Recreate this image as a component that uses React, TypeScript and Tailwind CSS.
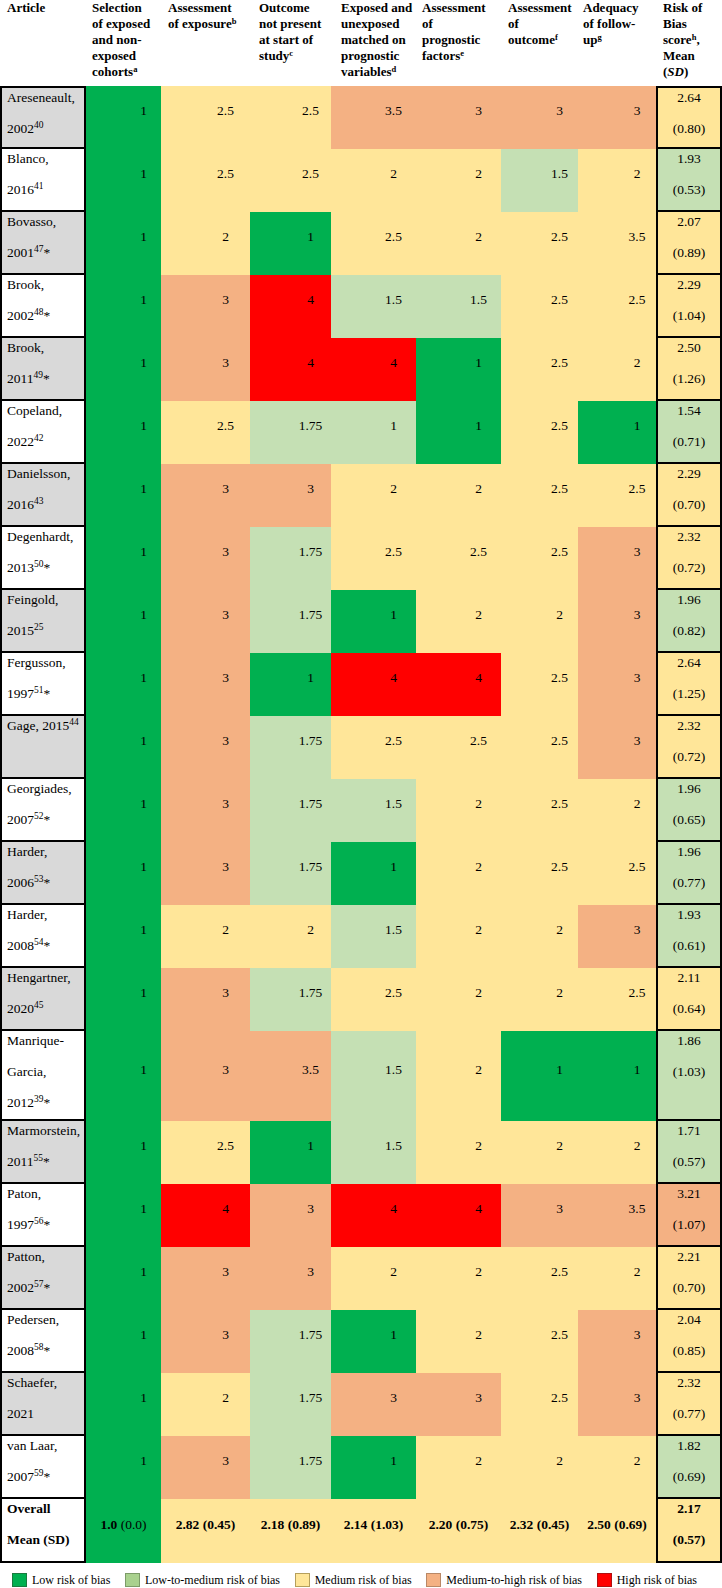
import React from "react";

type Col = "G" | "L" | "Y" | "O" | "R";

const BG: Record<Col, string> = {
  G: "bg-[#00b050]",
  L: "bg-[#c5e0b4]",
  Y: "bg-[#ffe699]",
  O: "bg-[#f4b183]",
  R: "bg-[#ff0000]",
};

const GRID =
  "grid grid-cols-[86px_75px_89px_81px_85px_85px_77px_78px_66px]";

type Row = {
  lines: React.ReactNode[];
  vals: [string, Col][];
  risk: [string, string, Col];
  gray: boolean;
  tall?: boolean;
};

const S = (n: string) => <sup className="text-[9.5px]">{n}</sup>;

const rows: Row[] = [
  { lines: ["Areseneault,", <>2002{S("40")}</>], vals: [["1", "G"], ["2.5", "Y"], ["2.5", "Y"], ["3.5", "O"], ["3", "O"], ["3", "O"], ["3", "O"]], risk: ["2.64", "(0.80)", "Y"], gray: true },
  { lines: ["Blanco,", <>2016{S("41")}</>], vals: [["1", "G"], ["2.5", "Y"], ["2.5", "Y"], ["2", "Y"], ["2", "Y"], ["1.5", "L"], ["2", "Y"]], risk: ["1.93", "(0.53)", "L"], gray: false },
  { lines: ["Bovasso,", <>2001{S("47")}*</>], vals: [["1", "G"], ["2", "Y"], ["1", "G"], ["2.5", "Y"], ["2", "Y"], ["2.5", "Y"], ["3.5", "Y"]], risk: ["2.07", "(0.89)", "Y"], gray: true },
  { lines: ["Brook,", <>2002{S("48")}*</>], vals: [["1", "G"], ["3", "O"], ["4", "R"], ["1.5", "L"], ["1.5", "L"], ["2.5", "Y"], ["2.5", "Y"]], risk: ["2.29", "(1.04)", "Y"], gray: false },
  { lines: ["Brook,", <>2011{S("49")}*</>], vals: [["1", "G"], ["3", "O"], ["4", "R"], ["4", "R"], ["1", "G"], ["2.5", "Y"], ["2", "Y"]], risk: ["2.50", "(1.26)", "Y"], gray: true },
  { lines: ["Copeland,", <>2022{S("42")}</>], vals: [["1", "G"], ["2.5", "Y"], ["1.75", "L"], ["1", "L"], ["1", "G"], ["2.5", "Y"], ["1", "G"]], risk: ["1.54", "(0.71)", "L"], gray: false },
  { lines: ["Danielsson,", <>2016{S("43")}</>], vals: [["1", "G"], ["3", "O"], ["3", "O"], ["2", "Y"], ["2", "Y"], ["2.5", "Y"], ["2.5", "Y"]], risk: ["2.29", "(0.70)", "Y"], gray: true },
  { lines: ["Degenhardt,", <>2013{S("50")}*</>], vals: [["1", "G"], ["3", "O"], ["1.75", "L"], ["2.5", "Y"], ["2.5", "Y"], ["2.5", "Y"], ["3", "O"]], risk: ["2.32", "(0.72)", "Y"], gray: false },
  { lines: ["Feingold,", <>2015{S("25")}</>], vals: [["1", "G"], ["3", "O"], ["1.75", "L"], ["1", "G"], ["2", "Y"], ["2", "Y"], ["3", "O"]], risk: ["1.96", "(0.82)", "L"], gray: true },
  { lines: ["Fergusson,", <>1997{S("51")}*</>], vals: [["1", "G"], ["3", "O"], ["1", "G"], ["4", "R"], ["4", "R"], ["2.5", "Y"], ["3", "O"]], risk: ["2.64", "(1.25)", "Y"], gray: false },
  { lines: [<>Gage, 2015{S("44")}</>], vals: [["1", "G"], ["3", "O"], ["1.75", "L"], ["2.5", "Y"], ["2.5", "Y"], ["2.5", "Y"], ["3", "O"]], risk: ["2.32", "(0.72)", "Y"], gray: true },
  { lines: ["Georgiades,", <>2007{S("52")}*</>], vals: [["1", "G"], ["3", "O"], ["1.75", "L"], ["1.5", "L"], ["2", "Y"], ["2.5", "Y"], ["2", "Y"]], risk: ["1.96", "(0.65)", "L"], gray: false },
  { lines: ["Harder,", <>2006{S("53")}*</>], vals: [["1", "G"], ["3", "O"], ["1.75", "L"], ["1", "G"], ["2", "Y"], ["2.5", "Y"], ["2.5", "Y"]], risk: ["1.96", "(0.77)", "L"], gray: true },
  { lines: ["Harder,", <>2008{S("54")}*</>], vals: [["1", "G"], ["2", "Y"], ["2", "Y"], ["1.5", "L"], ["2", "Y"], ["2", "Y"], ["3", "O"]], risk: ["1.93", "(0.61)", "L"], gray: false },
  { lines: ["Hengartner,", <>2020{S("45")}</>], vals: [["1", "G"], ["3", "O"], ["1.75", "L"], ["2.5", "Y"], ["2", "Y"], ["2", "Y"], ["2.5", "Y"]], risk: ["2.11", "(0.64)", "Y"], gray: true },
  { lines: ["Manrique-", "Garcia,", <>2012{S("39")}*</>], vals: [["1", "G"], ["3", "O"], ["3.5", "O"], ["1.5", "L"], ["2", "Y"], ["1", "G"], ["1", "G"]], risk: ["1.86", "(1.03)", "L"], gray: false, tall: true },
  { lines: ["Marmorstein,", <>2011{S("55")}*</>], vals: [["1", "G"], ["2.5", "Y"], ["1", "G"], ["1.5", "L"], ["2", "Y"], ["2", "Y"], ["2", "Y"]], risk: ["1.71", "(0.57)", "L"], gray: true },
  { lines: ["Paton,", <>1997{S("56")}*</>], vals: [["1", "G"], ["4", "R"], ["3", "O"], ["4", "R"], ["4", "R"], ["3", "O"], ["3.5", "O"]], risk: ["3.21", "(1.07)", "O"], gray: false },
  { lines: ["Patton,", <>2002{S("57")}*</>], vals: [["1", "G"], ["3", "O"], ["3", "O"], ["2", "Y"], ["2", "Y"], ["2.5", "Y"], ["2", "Y"]], risk: ["2.21", "(0.70)", "Y"], gray: true },
  { lines: ["Pedersen,", <>2008{S("58")}*</>], vals: [["1", "G"], ["3", "O"], ["1.75", "L"], ["1", "G"], ["2", "Y"], ["2.5", "Y"], ["3", "O"]], risk: ["2.04", "(0.85)", "Y"], gray: false },
  { lines: ["Schaefer,", "2021"], vals: [["1", "G"], ["2", "Y"], ["1.75", "L"], ["3", "O"], ["3", "O"], ["2.5", "Y"], ["3", "O"]], risk: ["2.32", "(0.77)", "Y"], gray: true },
  { lines: ["van Laar,", <>2007{S("59")}*</>], vals: [["1", "G"], ["3", "O"], ["1.75", "L"], ["1", "G"], ["2", "Y"], ["2", "Y"], ["2", "Y"]], risk: ["1.82", "(0.69)", "L"], gray: false },
];

const H = (n: string) => <sup className="text-[8.5px]">{n}</sup>;

function Header() {
  return (
    <div className={`${GRID} h-[86px] text-[13px] leading-[16px] font-bold whitespace-nowrap`}>
      <div className="pl-[7px]">Article</div>
      <div className="pl-[6px]">
        Selection<br />of exposed<br />and non-<br />exposed<br />cohorts{H("a")}
      </div>
      <div className="pl-[7px]">
        Assessment<br />of exposure{H("b")}
      </div>
      <div className="pl-[9px]">
        Outcome<br />not present<br />at start of<br />study{H("c")}
      </div>
      <div className="pl-[10px]">
        Exposed and<br />unexposed<br />matched on<br />prognostic<br />variables{H("d")}
      </div>
      <div className="pl-[6px]">
        Assessment<br />of<br />prognostic<br />factors{H("e")}
      </div>
      <div className="pl-[7px]">
        Assessment<br />of<br />outcome{H("f")}
      </div>
      <div className="pl-[5px]">
        Adequacy<br />of follow-<br />up{H("g")}
      </div>
      <div className="pl-[7px]">
        Risk of<br />Bias<br />score{H("h")},<br />Mean<br />(<i>SD</i>)
      </div>
    </div>
  );
}

function DataRow({ r, first }: { r: Row; first: boolean }) {
  return (
    <div className={`${GRID} ${r.tall ? "h-[90px]" : "h-[63px]"}`}>
      <div
        className={`${r.gray ? "bg-[#d9d9d9]" : "bg-white"} ${first ? "border-t-2" : ""} border-x-2 border-b-2 border-black pl-[5px] pt-[1px] flex flex-col gap-[13px] leading-[18px] whitespace-nowrap`}
      >
        {r.lines.map((l, i) => (
          <div key={i}>{l}</div>
        ))}
      </div>
      {r.vals.map(([v, c], i) => (
        <div key={i} className={`${BG[c]} flex items-center justify-center pl-10 pb-[13px] leading-[18px]`}>
          {v}
        </div>
      ))}
      <div
        className={`${BG[r.risk[2]]} ${first ? "border-t-2" : ""} border-x-2 border-b-2 border-black pt-[1px] flex flex-col items-center gap-[13px] leading-[18px]`}
      >
        <div>{r.risk[0]}</div>
        <div>{r.risk[1]}</div>
      </div>
    </div>
  );
}

function OverallRow() {
  const vals = ["2.82 (0.45)", "2.18 (0.89)", "2.14 (1.03)", "2.20 (0.75)", "2.32 (0.45)", "2.50 (0.69)"];
  return (
    <div className={`${GRID} h-[64px] font-bold`}>
      <div className="bg-white border-x-2 border-b-2 border-black pl-[5px] pt-[1px] flex flex-col gap-[13px] leading-[18px] whitespace-nowrap">
        <div>Overall</div>
        <div>Mean (SD)</div>
      </div>
      <div className="bg-[#00b050] flex items-center justify-center pb-[13px] leading-[18px] whitespace-nowrap">
        <span>1.0</span>
        <span className="font-normal">&nbsp;(0.0)</span>
      </div>
      {vals.map((v, i) => (
        <div key={i} className="bg-[#ffe699] flex items-center justify-center pb-[13px] leading-[18px] whitespace-nowrap">
          {v}
        </div>
      ))}
      <div className="bg-[#ffe699] border-x-2 border-b-2 border-black pt-[1px] flex flex-col items-center gap-[13px] leading-[18px]">
        <div>2.17</div>
        <div>(0.57)</div>
      </div>
    </div>
  );
}

function Legend() {
  const items: [string, string][] = [
    ["bg-[#00b050] border-[#1a7a3f]", "Low risk of bias"],
    ["bg-[#a9d18e] border-[#7c9b68]", "Low-to-medium risk of bias"],
    ["bg-[#ffe699] border-[#b59f5c]", "Medium risk of bias"],
    ["bg-[#f4b183] border-[#b98866]", "Medium-to-high risk of bias"],
    ["bg-[#ff0000] border-[#b01010]", "High risk of bias"],
  ];
  return (
    <div className="h-[25px] flex justify-between items-start pt-[10px] pl-[12px] pr-[25px] text-[12px] leading-[14px]">
      {items.map(([c, t]) => (
        <div key={t} className="flex items-center gap-[5px]">
          <div className={`w-[15px] h-[14px] border ${c}`} />
          <span>{t}</span>
        </div>
      ))}
    </div>
  );
}

export default function App() {
  return (
    <div className="w-[722px] h-[1588px] bg-white text-black font-['Liberation_Serif',serif] text-[13.5px] overflow-hidden">
      <Header />
      {rows.map((r, i) => (
        <DataRow key={i} r={r} first={i === 0} />
      ))}
      <OverallRow />
      <Legend />
    </div>
  );
}
